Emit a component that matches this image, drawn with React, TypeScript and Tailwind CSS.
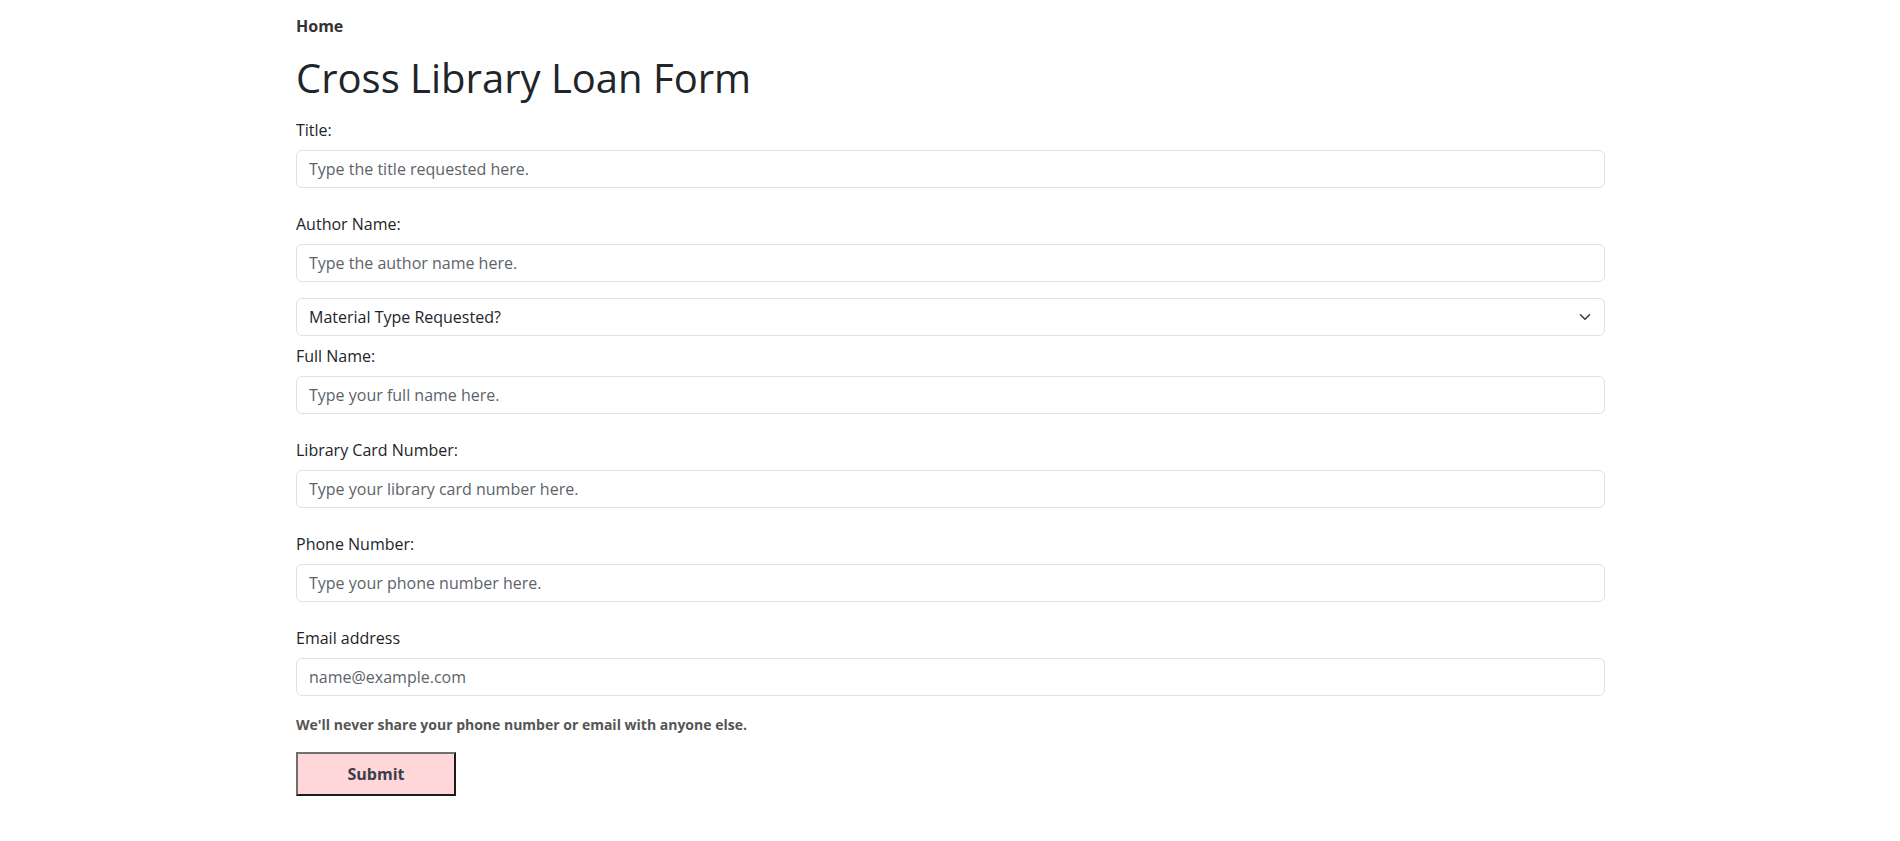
import React from "react";

const font = { fontFamily: '"Open Sans", "Noto Sans", sans-serif' };

function Field({ label, placeholder, className = "" }: { label: string; placeholder: string; className?: string }) {
  return (
    <div className={className}>
      <label className="block text-[16px] leading-[24px] text-[#212529] mb-[8px]">{label}</label>
      <input
        type="text"
        placeholder={placeholder}
        className="block w-full h-[38px] px-[12px] text-[16px] leading-[24px] text-[#212529] bg-white border border-[#dee2e6] rounded-[6px] placeholder:text-[#5c636a] outline-none"
      />
    </div>
  );
}

export default function App() {
  return (
    <div className="min-h-[841px] bg-white" style={font}>
      <div className="ml-[296px] w-[1309px] pt-[14px]">
        <div className="text-[16px] leading-[24px] font-bold text-[#333]">Home</div>
        <h1 className="mt-[16px] text-[40px] leading-[48px] font-normal text-[#212529]">Cross Library Loan Form</h1>
        <form className="mt-[16px]">
          <Field label="Title:" placeholder="Type the title requested here." />
          <Field label="Author Name:" placeholder="Type the author name here." className="mt-[24px]" />
          <div className="relative mt-[16px]">
            <select className="block w-full h-[38px] pl-[12px] pr-[36px] text-[16px] leading-[24px] text-[#212529] bg-white border border-[#dee2e6] rounded-[6px] appearance-none outline-none">
              <option>Material Type Requested?</option>
            </select>
            <svg className="absolute right-[12px] top-[13px] pointer-events-none" width="16" height="12" viewBox="0 0 16 16">
              <path d="M2 5l6 6 6-6" fill="none" stroke="#343a40" strokeWidth="2" strokeLinecap="round" strokeLinejoin="round" />
            </svg>
          </div>
          <Field label="Full Name:" placeholder="Type your full name here." className="mt-[8px]" />
          <Field label="Library Card Number:" placeholder="Type your library card number here." className="mt-[24px]" />
          <Field label="Phone Number:" placeholder="Type your phone number here." className="mt-[24px]" />
          <Field label="Email address" placeholder="name@example.com" className="mt-[24px]" />
          <div className="mt-[18px] text-[14px] leading-[21px] font-bold text-[#555]">
            We'll never share your phone number or email with anyone else.
          </div>
          <button
            type="button"
            className="mt-[17px] block w-[160px] h-[44px] bg-[#ffd7d9] border-2 border-t-[#707070] border-l-[#707070] border-r-[#1c1c1c] border-b-[#1c1c1c] text-[16px] font-bold text-[#3d3d48]"
          >
            Submit
          </button>
        </form>
      </div>
    </div>
  );
}
